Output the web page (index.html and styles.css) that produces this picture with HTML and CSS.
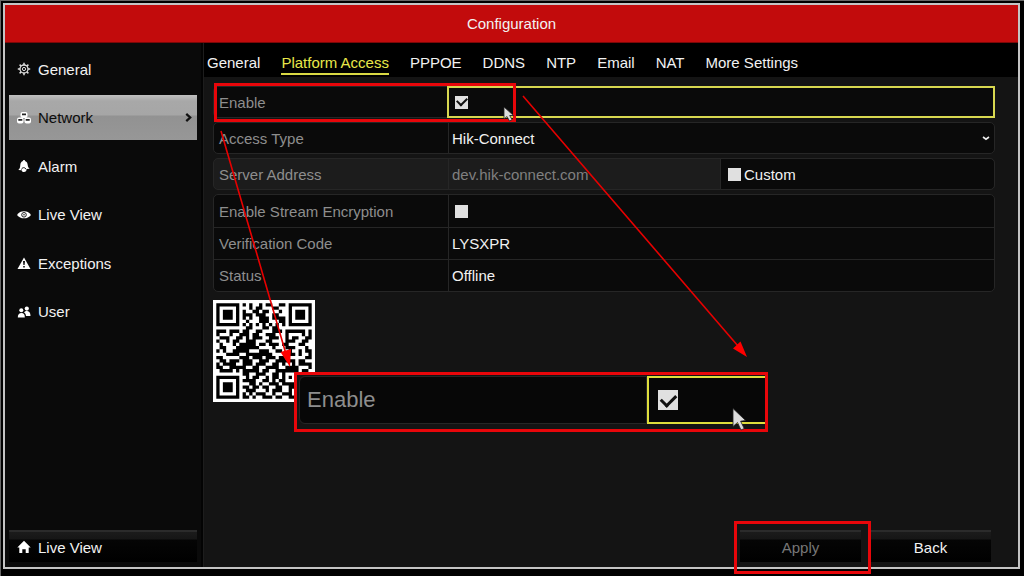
FILE: index.html
```html
<!DOCTYPE html>
<html lang="en">
<head>
  <meta charset="UTF-8">
  <meta name="viewport" content="width=device-width, initial-scale=1">
  <title>Configuration</title>
  <link rel="stylesheet" href="styles.css">
</head>
<body>

  <div class="window">
    <header class="titlebar"><h1>Configuration</h1></header>

    <div class="content">
      <aside class="sidebar">
        <nav class="menu">
          <button class="menu-item">
            <svg viewBox="0 0 14 14"><g fill="none" stroke="#ddd"><circle cx="7" cy="7" r="4" stroke-width="1.3"/><circle cx="7" cy="7" r="1.6" stroke-width="1"/><path stroke-width="1.5" d="M7 .8V3M7 11v2.2M.8 7H3M11 7h2.2M2.6 2.6l1.6 1.6M9.8 9.8l1.6 1.6M2.6 11.4l1.6-1.6M9.8 4.2l1.6-1.6"/></g></svg>
            General
          </button>
          <button class="menu-item active">
            <svg viewBox="0 0 14 14"><g fill="#fff"><rect x="3.500" y="1" width="7" height="6" rx="2"/><rect x="0" y="6.500" width="6.500" height="6" rx="2"/><rect x="7.500" y="6.500" width="6.500" height="6" rx="2"/></g><path fill="#222" d="M5 2.500h4v1.700H5zM1.300 8h4v1.700h-4zM8.700 8h4v1.700h-4z"/></svg>
            Network
            <svg class="arrow" viewBox="0 0 8 8"><path fill="none" stroke="#111" stroke-width="2" d="M2 .8L5.500 4 2 7.200"/></svg>
          </button>
          <button class="menu-item">
            <svg viewBox="0 0 14 14"><path fill="#fff" d="M7 1c.8 0 1 .5 1 1 2 .7 2.500 2 2.700 4 .2 2 .8 2.600 2 3.700L9.500 10c.3 2-1 3-2.500 3s-2.300-.8-2.300-1.800L1.300 11c1.500-1.500 1.800-2.500 2-5C3.500 3.800 4.200 2.700 6 2c0-.5.2-1 1-1z"/><path fill="none" stroke="#111" d="M4.500 10.500C5 9 6 8.500 7.300 8.700L9 10"/></svg>
            Alarm
          </button>
          <button class="menu-item">
            <svg viewBox="0 0 14 14"><path fill="#fff" d="M0 7c2-2.700 4-3.700 7-3.700S12 4.300 14 7c-2 2.500-4 3.300-7 3.300S2 9.500 0 7z"/><circle cx="7" cy="6.800" r="2.300" fill="none" stroke="#222"/><circle cx="7" cy="6.800" r=".8" fill="#222"/></svg>
            Live View
          </button>
          <button class="menu-item">
            <svg viewBox="0 0 14 14"><path fill="#fff" d="M7 1.500L13.500 13H.5z"/><path fill="#111" d="M6 5h2l-.4 4H6.400zM6.200 10h1.600v1.500H6.200z"/></svg>
            Exceptions
          </button>
          <button class="menu-item">
            <svg viewBox="0 0 14 14"><g fill="#fff"><circle cx="4.300" cy="5.300" r="2"/><path d="M.8 12.500C.8 9.500 2 8 4.500 8s3.300 1.500 3.300 4.500z"/><circle cx="9.800" cy="3.600" r="2.100"/><path d="M7 7.500c1-1.300 2-1.600 3.200-1.500 2.300.2 3.300 2 3.300 5H9C8.800 9 8.200 8.200 7 7.500z"/></g></svg>
            User
          </button>
        </nav>
        <button class="menu-item home">
          <svg viewBox="0 0 14 14"><path fill="#fff" d="M7 .8L.3 7.500h2V13h3V9.300h3.400V13h3V7.500h2z"/></svg>
          Live View
        </button>
      </aside>

      <main class="main">
        <nav class="tabs">
          <a href="#">General</a>
          <a href="#" class="active">Platform Access</a>
          <a href="#">PPPOE</a>
          <a href="#">DDNS</a>
          <a href="#">NTP</a>
          <a href="#">Email</a>
          <a href="#">NAT</a>
          <a href="#">More Settings</a>
        </nav>

        <form class="settings">
          <div class="group">
            <div class="row focus">
              <label for="enable">Enable</label>
              <div class="value"><input type="checkbox" id="enable" checked></div>
            </div>
          </div>
          <div class="group">
            <div class="row">
              <label for="accessType">Access Type</label>
              <div class="value">
                <select id="accessType"><option>Hik-Connect</option></select>
                <svg class="chevron" viewBox="0 0 8 8"><path fill="none" stroke="#eee" stroke-width="1.600" d="M1 3l3 2.200L7 3"/></svg>
              </div>
            </div>
          </div>
          <div class="group locked">
            <div class="row">
              <label for="server">Server Address</label>
              <div class="value"><input type="text" id="server" value="dev.hik-connect.com" disabled></div>
              <div class="custom">
                <input type="checkbox" id="custom"><label for="custom">Custom</label>
              </div>
            </div>
          </div>
          <div class="group">
            <div class="row">
              <label for="encryption">Enable Stream Encryption</label>
              <div class="value"><input type="checkbox" id="encryption"></div>
            </div>
            <div class="row">
              <label for="code">Verification Code</label>
              <div class="value"><input type="text" id="code" value="LYSXPR"></div>
            </div>
            <div class="row">
              <label for="status">Status</label>
              <div class="value"><output id="status">Offline</output></div>
            </div>
          </div>
          <svg class="qr" viewBox="-1 -1 31 31"><path id="qrPath" d=""/></svg>
        </form>

        <footer class="actions">
          <button class="btn muted">Apply</button>
          <button class="btn">Back</button>
        </footer>
      </main>
    </div>
  </div>

  <!-- markers drawn over the screen -->
  <div class="mark mark-enable"></div>
  <div class="mark mark-apply"></div>

  <div class="callout">
    <label for="enableBig">Enable</label>
    <div class="callout-value"><input type="checkbox" id="enableBig" checked></div>
  </div>

  <svg class="overlay" width="1024" height="576" viewBox="0 0 1024 576">
    <g stroke="#e60000" stroke-width="1.600">
      <path d="M221 131L286 354M523 96L738 346"/>
    </g>
    <path fill="#f00" d="M290 367L280.500 352 291 349zM747 357L733 348.500 740.500 341.500z"/>
    <g fill="#ddd" stroke="#222" stroke-width=".8">
      <path d="M504 107v12l3-2.500 2.500 4.500 2.500-1.300-2.300-4.200h3.800z"/>
      <path d="M733 408.500v18l4.500-4 3.500 7.500 3.200-1.500-3.600-7.300 5-.7z"/>
    </g>
  </svg>

  <script>
    const rows = [
      "11111110101001011001101111111",
      "10000010001011000110001000001",
      "10111010100110110001001011101",
      "10111010111011100110001011101",
      "10111010101001110111101011101",
      "10000010010001110001101000001",
      "11111110101010101010101111111",
      "00000000011000110110000000000",
      "11101110110011000111011111101",
      "10001001110110011100010000101",
      "01110011010111001110010110011",
      "10010110011100011000011100110",
      "01000101111101101110110001100",
      "01100011111110000100011100010",
      "10100111110001110011001001011",
      "00011110011111111000011101001",
      "11000001110111011101100000011",
      "01101110111001110011111101100",
      "10111100111011100110100101111",
      "11001111100110011110011110001",
      "01111010111110110011111110110",
      "00000000110011100110100011011",
      "11111110010110010110101010110",
      "10000010111100110101100011001",
      "10111010001101001110111111101",
      "10111010110110110011001100110",
      "10111010011100010111001011001",
      "10000010101011100100111010110",
      "11111110110100111011001101011"
    ];

    let d = "";
    rows.forEach((row, y) => {
      for (let x = 0; x < row.length; x++) {
        if (row[x] === "1") d += `M${x} ${y}h1v1h-1z`;
      }
    });
    document.getElementById("qrPath").setAttribute("d", d);
  </script>
</body>
</html>
```
FILE: styles.css
```css
* {
  box-sizing: border-box;
}

body {
  margin: 0;
  height: 100vh;
  padding: 2px 4px 7px 2px;
  border-top: 1px solid #666;
  border-left: 1px solid #666;
  background: #000;
  color: #f2f2f2;
  font-family: "Liberation Sans", Arial, sans-serif;
  font-size: 15px;
  overflow: hidden;
}

button, input, select {
  font: inherit;
  color: inherit;
}

.window {
  height: 100%;
  display: flex;
  flex-direction: column;
  border: 2px solid #c4c4c4;
  background: #141414;
}

.titlebar {
  height: 38px;
  display: flex;
  align-items: center;
  justify-content: center;
  background: #c20b0c;
  border-bottom: 1px solid #7a0808;
}

.titlebar h1 {
  margin: 0;
  font-size: 15px;
  font-weight: normal;
}

.content {
  flex: 1;
  display: flex;
}

/* sidebar */
.sidebar {
  width: 198px;
  padding: 2px 4px 5px 4px;
  display: flex;
  flex-direction: column;
  justify-content: space-between;
  background: #0a0a0a;
  border-right: 2px solid #030303;
}

.menu {
  height: 291px;
  display: grid;
  grid-auto-rows: 1fr;
  align-items: center;
}

.menu-item {
  width: 100%;
  height: 45px;
  padding: 0 4px 0 8px;
  display: flex;
  align-items: center;
  gap: 7px;
  border: none;
  background: none;
  text-align: left;
  cursor: pointer;
}

.menu-item svg {
  width: 14px;
  height: 14px;
}

.menu-item.active {
  color: #0c0c0c;
  background: linear-gradient(#c0c0c0 0, #a8a8a8 6px, #a6a6a6 20px, #929292 21px, #979797 100%);
}

.menu-item .arrow {
  width: 9px;
  height: 9px;
  margin-left: auto;
}

.menu-item.home {
  height: 32px;
}

.menu-item.home,
.btn {
  border: none;
  border-top: 2px solid #2b2b2b;
  background: linear-gradient(#1b1b1b 0, #161616 7px, #050505 8px, #000 100%);
}

/* main area */
.main {
  flex: 1;
  display: flex;
  flex-direction: column;
  border-left: 1px solid #1d1d1d;
}

.tabs {
  height: 34px;
  padding: 8px 3px 0;
  display: flex;
  align-items: flex-start;
  gap: 21px;
  background: #000;
}

.tabs a {
  height: 24px;
  color: inherit;
  text-decoration: none;
  line-height: 23px;
}

.tabs a.active {
  color: #e8e84a;
  border-bottom: 2px solid #d9d944;
}

.settings {
  flex: 1;
  padding: 9px 23px 0 9px;
  display: flex;
  flex-direction: column;
  gap: 4px;
}

.group {
  border: 1px solid #262626;
  border-radius: 5px;
  background: #0a0a0a;
}

.row {
  height: 30px;
  display: grid;
  grid-template-columns: 30% 1fr;
}

.row + .row,
.row:not(:last-child) {
  height: 32px;
}

.row + .row {
  border-top: 1px solid #262626;
}

.row > label {
  padding-left: 5px;
  align-self: center;
  color: #8e8e8e;
}

.value {
  min-width: 0;
  padding: 0 4px 0 3px;
  display: flex;
  align-items: center;
  border-left: 1px solid #262626;
}

.focus .value {
  margin: -1px;
  border: 2px solid #d8d850;
}

.value input[type="text"],
.value select {
  flex: 1;
  min-width: 0;
  padding: 0;
  border: none;
  outline: none;
  background: none;
  appearance: none;
}

.value input:disabled {
  color: #808080;
}

.chevron {
  width: 8px;
  height: 8px;
}

.locked {
  background: #1c1c1c;
}

.locked .row {
  grid-template-columns: 30% 1fr 35%;
}

.custom {
  margin: -1px;
  padding-left: 7px;
  display: flex;
  align-items: center;
  gap: 3px;
  border: 1px solid #262626;
  border-radius: 0 5px 5px 0;
  background: #0a0a0a;
}

input[type="checkbox"] {
  width: 13px;
  height: 13px;
  margin: 0;
  display: grid;
  place-items: center;
  appearance: none;
  background: #e0e0e0;
}

.value input[type="checkbox"] {
  margin-left: 3px;
}

input[type="checkbox"]:checked::after {
  content: "";
  width: 8px;
  height: 5px;
  margin-bottom: 3px;
  border-left: 2px solid #111;
  border-bottom: 2px solid #111;
  transform: rotate(-45deg);
}

.qr {
  width: 102px;
  height: 102px;
  margin-top: 4px;
  background: #fff;
}

.actions {
  padding: 0 27px 5px 0;
  display: flex;
  justify-content: flex-end;
  gap: 9px;
}

.btn {
  width: 121px;
  height: 32px;
  cursor: pointer;
}

.btn.muted {
  color: #777;
}

/* markers */
.mark,
.callout {
  position: absolute;
  border: 3px solid #e8060a;
}

.mark-enable {
  left: 214px;
  top: 83px;
  width: 302px;
  height: 39px;
}

.mark-apply {
  left: 734px;
  top: 521px;
  width: 137px;
  height: 53px;
}

.callout {
  left: 294px;
  top: 372px;
  width: 474px;
  height: 60px;
  padding: 1px 0 5px 2px;
  display: flex;
  background: #141414;
  font-size: 22px;
}

.callout label {
  flex: 1;
  padding-left: 7px;
  border: 1px solid #262626;
  border-radius: 6px 0 0 6px;
  background: #070707;
  color: #8e8e8e;
  line-height: 46px;
}

.callout-value {
  width: 118px;
  padding-left: 9px;
  display: flex;
  align-items: center;
  border: 2px solid #dede3c;
  border-right: none;
  background: #070707;
}

.callout input[type="checkbox"] {
  width: 20px;
  height: 20px;
}

.callout input[type="checkbox"]:checked::after {
  width: 12px;
  height: 7px;
  border-width: 3px;
}

.overlay {
  position: absolute;
  left: 0;
  top: 0;
  pointer-events: none;
}
```
